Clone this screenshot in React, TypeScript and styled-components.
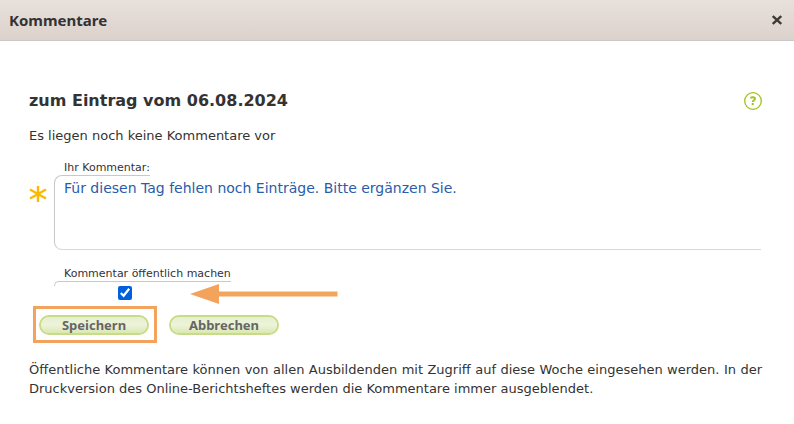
import React, { useState } from 'react';
import styled, { createGlobalStyle } from 'styled-components';

const GlobalStyle = createGlobalStyle`
  *, *::before, *::after { box-sizing: border-box; }
  body {
    margin: 0;
    background: #fff;
    color: #333;
    font-family: Verdana, "DejaVu Sans", sans-serif;
    font-size: 13px;
    line-height: 19px;
  }
`;

const TitleBar = styled.header`
  display: flex;
  align-items: center;
  justify-content: space-between;
  height: 41px;
  padding: 0 12px 0 9px;
  border-bottom: 1px solid #ccc6c6;
  background: linear-gradient(#e8e0da, #dcd2cd);
`;

const Title = styled.h1`
  margin: 0;
  font-family: "Noto Sans", sans-serif;
  font-size: 15px;
  font-weight: 700;
`;

const IconButton = styled.button`
  display: flex;
  padding: 0;
  border: 0;
  background: none;
  cursor: pointer;
`;

const Content = styled.main`
  padding: 50px 32px 24px 29px;
`;

const HeadingRow = styled.div`
  display: flex;
  align-items: center;
  justify-content: space-between;
  height: 20px;
`;

const Heading = styled.h2`
  margin: 0;
  font-size: 16px;
  font-weight: 700;
  line-height: 18px;
`;

const Notice = styled.p`
  margin: 0 0 16px;
`;

const Hint = styled.p`
  margin: 0;
  text-align: justify;
`;

const Form = styled.form`
  display: flex;
  flex-direction: column;
  margin: 15px 0 25px;
`;

const Field = styled.div`
  display: grid;
  grid-template-columns: 25px 1fr;
`;

const Required = styled.span`
  display: flex;
  padding-top: 24px;
`;

const FieldBody = styled.div`
  display: flex;
  flex-direction: column;
  align-items: flex-start;
`;

const Label = styled.label<{ $corner: number }>`
  padding-left: 10px;
  font-size: 11px;
  line-height: 14px;

  &::after {
    content: '';
    display: block;
    height: ${(p) => p.$corner}px;
    margin-left: -10px;
    border-top: 1px solid #c8c8c8;
    border-left: 1px solid #c8c8c8;
    border-top-left-radius: 8px;
  }
`;

const TextFrame = styled.div`
  align-self: stretch;
  height: 67px;
  margin-right: 1px;
  border-left: 1px solid #c8c8c8;
  border-bottom: 1px solid #d8d8d8;
  border-bottom-left-radius: 8px;
`;

const TextArea = styled.textarea`
  display: block;
  width: 100%;
  height: 70px;
  margin-top: -4px;
  padding: 0 9px;
  border: 0;
  outline: 0;
  resize: none;
  background: transparent;
  color: #2a5caa;
  font: inherit;
  font-size: 14px;
`;

const CheckBox = styled.input`
  width: 14px;
  height: 14px;
  margin: 0 0 0 64px;
  accent-color: #005fdd;
`;

const CheckField = styled(Field)`
  position: relative;
  margin-top: 17px;
`;

const Actions = styled.div`
  display: flex;
  gap: 20px;
  margin: 15px 0 0 10px;
`;

const Highlighted = styled.div`
  position: relative;

  &::after {
    content: '';
    position: absolute;
    inset: -9px -8px -8px -6px;
    border: 3px solid #f3a35c;
    pointer-events: none;
  }
`;

const PillButton = styled.button`
  display: block;
  width: 110px;
  height: 20px;
  padding: 0;
  border: 2px solid #c8db86;
  border-radius: 10px;
  background: linear-gradient(#e6efd0, #edf4da 50%, #d9e8b2) padding-box;
  color: #666;
  font-family: "Noto Sans", sans-serif;
  font-size: 13px;
  font-weight: 700;
  line-height: 16px;
  cursor: pointer;
`;

const Arrow = styled.svg`
  position: absolute;
  left: 161px;
  top: 17px;
`;

export default function App() {
  const [comment, setComment] = useState(
    'Für diesen Tag fehlen noch Einträge. Bitte ergänzen Sie.',
  );
  const [isPublic, setIsPublic] = useState(true);

  return (
    <>
      <GlobalStyle />
      <TitleBar>
        <Title>Kommentare</Title>
        <IconButton type="button" aria-label="Schließen">
          <svg width="10" height="10" viewBox="0 0 10 10">
            <path d="M0.8 1L9.2 9M9.2 1L0.8 9" stroke="#3d3a38" strokeWidth="2.4" />
          </svg>
        </IconButton>
      </TitleBar>
      <Content>
        <HeadingRow>
          <Heading>zum Eintrag vom 06.08.2024</Heading>
          <IconButton type="button" aria-label="Hilfe">
            <svg width="18" height="18" viewBox="0 0 18 18" fill="none" stroke="#a2c01c">
              <circle cx="9" cy="9" r="8.3" strokeWidth="1.3" />
              <path d="M6.3 5.9C7.2 5.4 8.1 5.2 8.8 5.2C10.2 5.2 11 5.8 11 6.8C11 8.4 8.7 8.5 8.7 10" strokeWidth="1.9" />
              <path d="M8.7 11V13" strokeWidth="2" />
            </svg>
          </IconButton>
        </HeadingRow>
        <Form onSubmit={(e) => e.preventDefault()}>
          <Notice>Es liegen noch keine Kommentare vor</Notice>
          <Field>
            <Required>
              <svg width="18" height="18" viewBox="0 0 18 18" aria-hidden="true">
                <path d="M9 1V17M1 4.5L17 13.5M17 4.5L1 13.5" stroke="#fbb900" strokeWidth="2.4" />
              </svg>
            </Required>
            <FieldBody>
              <Label htmlFor="comment" $corner={8}>Ihr Kommentar:</Label>
              <TextFrame>
                <TextArea
                  id="comment"
                  required
                  spellCheck={false}
                  value={comment}
                  onChange={(e) => setComment(e.target.value)}
                />
              </TextFrame>
            </FieldBody>
          </Field>
          <CheckField>
            <span />
            <FieldBody>
              <Label htmlFor="public" $corner={5}>Kommentar öffentlich machen</Label>
              <CheckBox
                id="public"
                type="checkbox"
                checked={isPublic}
                onChange={(e) => setIsPublic(e.target.checked)}
              />
            </FieldBody>
            <Arrow width="148" height="20" viewBox="0 0 148 20" aria-hidden="true">
              <path d="M0 10L29 0V7.5H147.5V12.5H29V20Z" fill="#f3a35c" />
            </Arrow>
          </CheckField>
          <Actions>
            <Highlighted>
              <PillButton type="submit">Speichern</PillButton>
            </Highlighted>
            <PillButton type="button">Abbrechen</PillButton>
          </Actions>
        </Form>
        <Hint>
          Öffentliche Kommentare können von allen Ausbildenden mit Zugriff auf diese Woche eingesehen
          werden. In der Druckversion des Online-Berichtsheftes werden die Kommentare immer
          ausgeblendet.
        </Hint>
      </Content>
    </>
  );
}
